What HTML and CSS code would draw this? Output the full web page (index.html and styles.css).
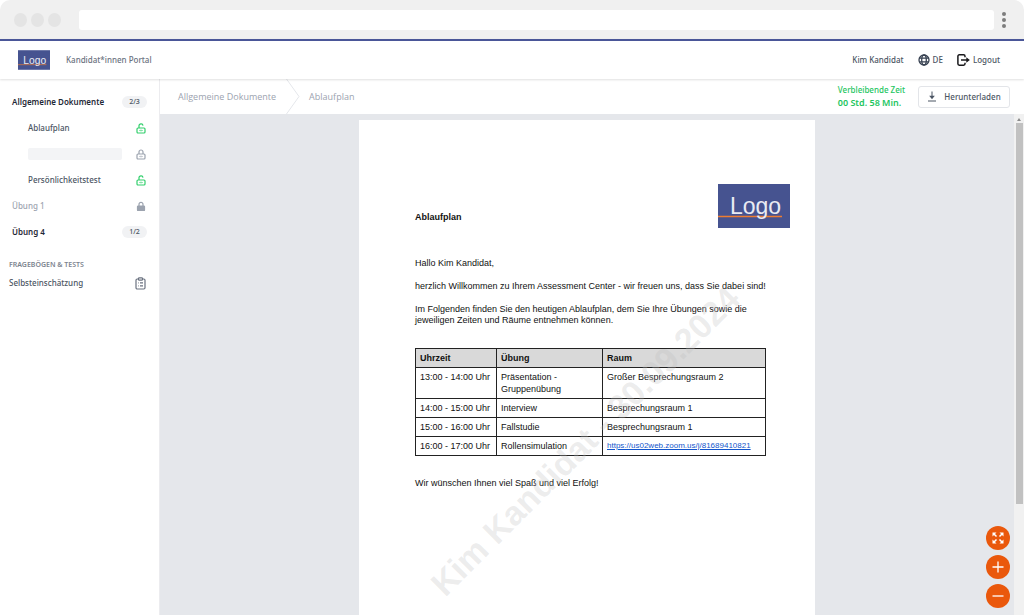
FILE: index.html
```html
<!DOCTYPE html>
<html lang="de">
<head>
<meta charset="utf-8">
<title>Kandidat*innen Portal</title>
<meta name="viewport" content="width=device-width, initial-scale=1">
<link rel="stylesheet" href="styles.css">
</head>
<body>
<svg class="sprite" aria-hidden="true">
  <symbol id="unlock" viewBox="0 0 10 11">
    <rect x="1" y="5" width="8" height="5" rx="1"/><path d="M3 5V3a2 2 0 0 1 4-.4M5 6.800v1.400M3 7.500h.5M6.500 7.500h.5"/>
  </symbol>
  <symbol id="lock" viewBox="0 0 10 11">
    <rect x="1" y="5" width="8" height="5" rx="1"/><path d="M3 5V3a2 2 0 0 1 4 0v2M5 6.800v1.400M3 7.500h.5M6.500 7.500h.5"/>
  </symbol>
  <symbol id="locked" viewBox="0 0 10 11">
    <rect x="1.500" y="5" width="7" height="4.500" rx=".6" fill="currentColor"/><path d="M3 5V3.400a2 2 0 0 1 4 0V5"/>
  </symbol>
</svg>
<div class="browser">
  <span class="dot"></span><span class="dot"></span><span class="dot"></span>
  <input class="address" type="text" aria-label="Adresse">
  <button class="menu" type="button" aria-label="Menü"><span></span><span></span><span></span></button>
</div>
<header class="header">
  <svg class="logo" viewBox="0 0 72 44" role="img" aria-label="Logo">
    <rect class="logo-bg" width="72" height="44"/><path class="logo-line" d="M0 32.500h64"/>
    <text x="12" y="30" class="logo-text">Logo</text>
  </svg>
  <span class="portal">Kandidat*innen Portal</span>
  <nav class="account">
    <span class="user">Kim Kandidat</span>
    <button class="tool" type="button">
      <svg class="globe" viewBox="0 0 12 12"><circle cx="6" cy="6" r="5"/><ellipse cx="6" cy="6" rx="2.300" ry="5"/><path d="M1.500 4.200h9M1.500 7.800h9"/></svg>DE
    </button>
    <a class="tool logout" href="#">
      <svg class="exit" viewBox="0 0 13 12"><path d="M8 3.300V2.200A1.400 1.400 0 0 0 6.600 .8H2.300A1.400 1.400 0 0 0 .9 2.200v7.600a1.400 1.400 0 0 0 1.400 1.400h4.300A1.400 1.400 0 0 0 8 9.800V8.700M4 6h7"/><path class="solid" d="M9.300 3.200 12.800 6 9.300 8.800z"/></svg>Logout
    </a>
  </nav>
</header>
<div class="shell">
  <aside class="sidebar">
    <ul class="docs">
      <li><a class="group" href="#">Allgemeine Dokumente</a><span class="badge">2/3</span></li>
      <li class="child"><a href="#">Ablaufplan</a><svg class="icon green"><use href="#unlock"/></svg></li>
      <li class="child"><span class="placeholder"></span><svg class="icon grey"><use href="#lock"/></svg></li>
      <li class="child"><a href="#">Persönlichkeitstest</a><svg class="icon green"><use href="#unlock"/></svg></li>
      <li><span class="muted">Übung 1</span><svg class="icon grey"><use href="#locked"/></svg></li>
      <li><a class="group" href="#">Übung 4</a><span class="badge">1/2</span></li>
    </ul>
    <h2 class="section">Fragebögen &amp; Tests</h2>
    <a class="test" href="#">Selbsteinschätzung
      <svg class="clip" viewBox="0 0 11 13"><rect x="1" y="2" width="9" height="10" rx="1.200"/><rect x="3.500" y=".8" width="4" height="2.400" rx=".8" fill="#fff"/><path d="M5 5.800h3M5 8.800h3M3 5.800h.6M3 8.800h.6"/></svg>
    </a>
  </aside>
  <main class="main">
    <div class="toolbar">
      <nav class="crumbs">
        <a href="#">Allgemeine Dokumente</a>
        <svg class="chevron" viewBox="0 0 14 35" preserveAspectRatio="none"><path d="M.5 0 13 17.500 .5 35"/></svg>
        <a href="#">Ablaufplan</a>
      </nav>
      <div class="time"><span>Verbleibende Zeit</span><strong>00 Std. 58 Min.</strong></div>
      <button class="download" type="button">
        <svg class="down" viewBox="0 0 10 11"><path d="M5 .5v6.500M1 10h8"/><path class="solid" d="M2.200 4.700h5.600L5 8.200z"/></svg>Herunterladen
      </button>
    </div>
    <div class="viewer">
      <div class="canvas">
        <article class="page">
          <div class="head">
            <h1>Ablaufplan</h1>
            <svg class="doc-logo" viewBox="0 0 72 44" role="img" aria-label="Logo">
              <rect class="logo-bg" width="72" height="44"/><path class="logo-line" d="M0 32.500h64"/>
              <text x="12" y="30" class="logo-text">Logo</text>
            </svg>
          </div>
          <p>Hallo Kim Kandidat,</p>
          <p>herzlich Willkommen zu Ihrem Assessment Center - wir freuen uns, dass Sie dabei sind!</p>
          <p>Im Folgenden finden Sie den heutigen Ablaufplan, dem Sie Ihre Übungen sowie die<br>jeweiligen Zeiten und Räume entnehmen können.</p>
          <table>
            <colgroup><col class="c-time"><col class="c-task"><col></colgroup>
            <thead><tr><th scope="col">Uhrzeit</th><th scope="col">Übung</th><th scope="col">Raum</th></tr></thead>
            <tbody>
              <tr><td>13:00 - 14:00 Uhr</td><td>Präsentation -<br>Gruppenübung</td><td>Großer Besprechungsraum 2</td></tr>
              <tr><td>14:00 - 15:00 Uhr</td><td>Interview</td><td>Besprechungsraum 1</td></tr>
              <tr><td>15:00 - 16:00 Uhr</td><td>Fallstudie</td><td>Besprechungsraum 1</td></tr>
              <tr><td>16:00 - 17:00 Uhr</td><td>Rollensimulation</td><td><a href="#">https://us02web.zoom.us/j/81689410821</a></td></tr>
            </tbody>
          </table>
          <p>Wir wünschen Ihnen viel Spaß und viel Erfolg!</p>
          <div class="watermark">Kim Kandidat - 30.09.2024</div>
        </article>
      </div>
      <div class="scrollbar"><span class="arrow"></span><span class="thumb"></span></div>
      <div class="zoom">
        <button type="button" aria-label="Vollbild"><svg viewBox="0 0 24 24"><path class="solid" d="M6.500 6.500h4L6.500 10.500zM17.500 6.500v4l-4-4zM6.500 17.500v-4l4 4zM17.500 17.500h-4l4-4z"/><path class="bold" d="m7.500 7.500 3 3M16.500 7.500l-3 3M7.500 16.500l3-3M16.500 16.500l-3-3"/></svg></button>
        <button type="button" aria-label="Vergrößern"><svg viewBox="0 0 24 24"><path class="mark" d="M12 6.500v11M6.500 12h11"/></svg></button>
        <button type="button" aria-label="Verkleinern"><svg viewBox="0 0 24 24"><path class="mark" d="M6.500 12h11"/></svg></button>
      </div>
    </div>
  </main>
</div>
</body>
</html>
```

FILE: styles.css
```css
* { box-sizing: border-box; }
body {
  margin: 0;
  height: 100vh;
  display: flex;
  flex-direction: column;
  overflow: hidden;
  background: #fff;
  color: #4b5563;
  font: 500 8px/12px "Noto Sans", "Open Sans", sans-serif;
}
a { color: inherit; text-decoration: none; }
button { font: inherit; color: inherit; border: 0; padding: 0; background: none; }
svg { fill: none; stroke: currentColor; flex: none; }
svg .solid { fill: currentColor; stroke: none; }
.sprite { position: absolute; width: 0; height: 0; }

.browser {
  flex: none;
  display: flex;
  align-items: center;
  gap: 4px;
  height: 39px;
  padding: 0 18px 0 14px;
  background: #f0f0f0;
  border-radius: 10px 10px 0 0;
}
.dot { width: 13px; height: 14px; border-radius: 50%; background: #e4e4e4; }
.address {
  flex: 1;
  height: 20px;
  min-width: 0;
  margin-left: 14px;
  border: 0;
  border-radius: 3px;
  background: #fff;
}
.menu { display: flex; flex-direction: column; gap: 2px; margin-left: 4px; }
.menu span { width: 4px; height: 4px; border-radius: 50%; background: #7d7d7d; }

.header {
  position: relative;
  flex: none;
  display: flex;
  align-items: center;
  height: 40px;
  padding: 0 24px 0 18px;
  border-top: 2px solid #4a5698;
  box-shadow: 0 1px 2px #00000020;
}
.logo { width: 32px; height: 20px; }
.logo-bg { fill: #465390; stroke: none; }
.logo-line { stroke: #ed7d31; stroke-width: 1.5; }
.logo-text { font: 400 23px "Liberation Sans", Arial, sans-serif; fill: #e9ebf3; stroke: none; }
.portal { margin-left: 16px; color: #6b7280; }
.account { display: flex; align-items: center; gap: 14px; margin-left: auto; }
.tool { display: flex; align-items: center; gap: 3px; }
.globe { width: 12px; height: 12px; stroke: #374151; stroke-width: 1.3; }
.exit { width: 13px; height: 12px; color: #18181b; stroke-width: 1.5; }

.shell { flex: 1; display: flex; min-height: 0; }
.sidebar { flex: none; width: 160px; padding: 10px 12px 0 9px; border-right: 1px solid #ececef; }
.docs { list-style: none; margin: 0; padding: 0 0 0 3px; }
.docs li { display: flex; align-items: center; justify-content: space-between; height: 26px; }
.docs .child { padding-left: 16px; }
.group { color: #1f2937; font-weight: 600; }
.muted { color: #9ca3af; }
.badge { width: 25px; border-radius: 6px; background: #f1f2f4; font-size: 7px; text-align: center; }
.placeholder { width: 94px; height: 12px; border-radius: 2px; background: #f3f4f6; }
.icon { width: 10px; height: 11px; margin-right: 1px; stroke-width: 1.2; }
.green { color: #32cf6c; }
.grey { color: #9ca3af; }
.section { margin: 14px 0 4px; font-size: 7px; line-height: 12px; font-weight: 600; text-transform: uppercase; color: #7c838e; }
.test { display: flex; align-items: center; justify-content: space-between; line-height: 16px; }
.clip { width: 11px; height: 13px; margin-right: 1px; stroke: #6b7280; stroke-width: 1.2; }

.main { flex: 1; display: flex; flex-direction: column; min-width: 0; }
.toolbar { flex: none; display: flex; align-items: center; height: 35px; padding-right: 14px; }
.crumbs { display: flex; align-items: center; height: 100%; padding-left: 18px; font: 400 9px/12px "Open Sans", "Noto Sans", sans-serif; color: #9ca3af; }
.chevron { width: 14px; height: 35px; margin: 0 9px 0 10px; stroke: #e5e7eb; }
.time { display: flex; flex-direction: column; margin-left: auto; color: #22c55e; }
.time strong { font-size: 9px; line-height: 14px; font-weight: 600; }
.download {
  display: flex;
  align-items: center;
  justify-content: center;
  gap: 7px;
  width: 92px;
  height: 22px;
  margin-left: 13px;
  border: 1px solid #e3e5e9;
  border-radius: 3px;
}
.down { width: 10px; height: 11px; }

.viewer { position: relative; flex: 1; display: flex; min-height: 0; background: #e5e7eb; }
.canvas { flex: 1; overflow: hidden; padding-top: 6px; }
.scrollbar { width: 10px; background: #f1f1f1; display: flex; flex-direction: column; align-items: center; }
.arrow { margin: 4px 0 2px; border: 2px solid transparent; border-top: 0; border-bottom: 3px solid #8b8b8b; }
.thumb { width: 7px; height: 76%; background: #c1c1c1; }
.zoom { position: absolute; right: 14px; bottom: 7px; display: flex; flex-direction: column; gap: 5px; }
.zoom button { width: 24px; height: 24px; border-radius: 50%; background: #ea580c; color: #fff; }
.zoom svg { display: block; }
.zoom .bold { stroke-width: 1.5; }
.zoom .mark { stroke-width: 1.3; }

.page {
  position: relative;
  width: 456px;
  min-height: 645px;
  margin: 0 auto;
  padding: 64px 25px 0 56px;
  background: #fff;
  color: #111;
  font: 400 9px/11px "Liberation Sans", Arial, sans-serif;
}
.watermark {
  position: absolute;
  top: 321px;
  left: 226px;
  transform: translate(-50%, -50%) rotate(-45deg);
  font-size: 34px;
  line-height: 36px;
  font-weight: 700;
  white-space: nowrap;
  color: #c0c0c04d;
  pointer-events: none;
}
.head { display: flex; align-items: flex-start; justify-content: space-between; margin-bottom: 30px; }
.doc-logo { width: 72px; height: 44px; }
h1 { margin: 27px 0 0; font-size: 9px; line-height: 12px; }
.page p { margin: 0 0 12px; white-space: nowrap; }
table { width: 351px; margin: 22px 0; border-collapse: collapse; table-layout: fixed; }
th, td { padding: 3px 3px 3px 4px; border: 1px solid #222; line-height: 12px; text-align: left; vertical-align: top; }
th { background: #d9d9d9; }
.c-time { width: 81px; }
.c-task { width: 106px; }
td a { display: block; color: #1155cc; font-size: 8px; text-decoration: underline; }
```
